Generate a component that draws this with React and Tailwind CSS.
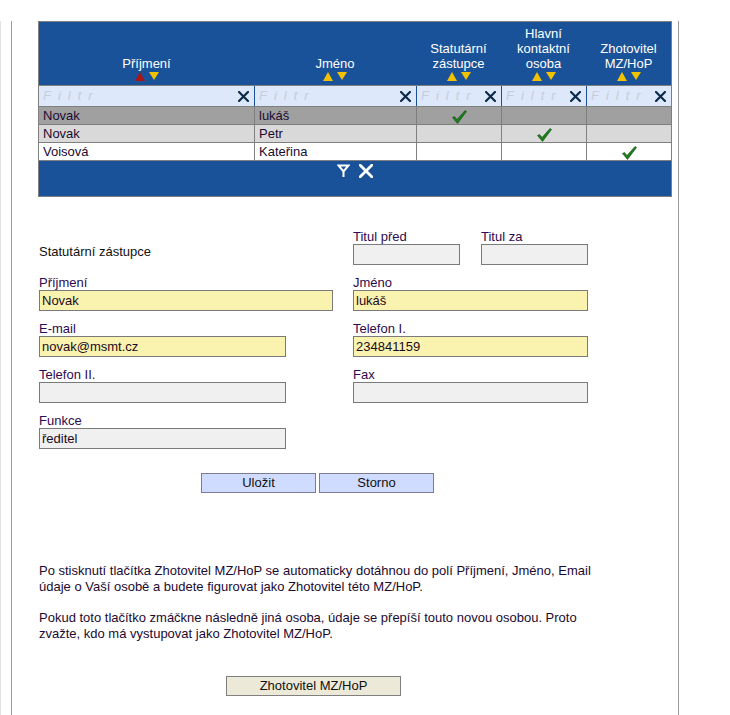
import React from "react"

const font = { fontFamily: '"Liberation Sans", Arial, sans-serif' }

const TriUp = ({ color }) => (
    <svg width="10" height="9" viewBox="0 0 10 9"><path d="M5 0 L10 9 L0 9 Z" fill={color} /></svg>
)

const TriDown = () => (
    <svg width="10" height="9" viewBox="0 0 10 9"><path d="M0 0 L10 0 L5 8 Z" fill="#f2c200" /></svg>
)

const SmallX = ({ color = "#0c2b4b", size = 11, w = 2.2 }) => (
    <svg width={size} height={size} viewBox="0 0 11 11">
        <path d="M1 1 L10 10 M10 1 L1 10" stroke={color} strokeWidth={w} strokeLinecap="square" />
    </svg>
)

const Check = () => (
    <svg width="15" height="14" viewBox="0 0 15 14">
        <path d="M0.5 7.5 L2.5 6.5 L5 9.5 L13 0.5 L14.5 1.5 L5.5 13.5 Z" fill="#1f7d1f" stroke="#0f4f0f" strokeWidth="0.6" />
    </svg>
)

const Funnel = () => (
    <svg width="13" height="14" viewBox="0 0 13 14">
        <path d="M1.5 1.5 H11.5 L6.5 7.5 Z" fill="none" stroke="#fff" strokeWidth="2" strokeLinejoin="miter" />
        <path d="M6.5 7 V13" stroke="#fff" strokeWidth="2" />
    </svg>
)

const columns = [
    { title: ["Příjmení"], first: true },
    { title: ["Jméno"] },
    { title: ["Statutární", "zástupce"] },
    { title: ["Hlavní", "kontaktní", "osoba"] },
    { title: ["Zhotovitel", "MZ/HoP"] },
]

const rows = [
    { bg: "bg-[#a0a0a0]", prijmeni: "Novak", jmeno: "lukáš", check: 2 },
    { bg: "bg-[#d9d9d9]", prijmeni: "Novak", jmeno: "Petr", check: 3 },
    { bg: "bg-white", prijmeni: "Voisová", jmeno: "Kateřina", check: 4 },
]

const grid = "grid grid-cols-[215px_162px_85px_85px_85px]"

const Table = () => (
    <div className="ml-[26px] mt-[21px] w-[634px] border border-[#7f7f7f] text-[13px]">
        <div className={grid + " h-[63px] bg-[#1a5299]"}>
            {columns.map((c, i) => (
                <div key={i} className="flex flex-col items-center justify-end pb-[4px] text-white leading-[15px] text-center">
                    {c.title.map(t => <div key={t}>{t}</div>)}
                    <div className="flex gap-[4px] mt-[1px]">
                        <TriUp color={c.first ? "#a8161a" : "#f2c200"} />
                        <TriDown />
                    </div>
                </div>
            ))}
        </div>
        <div className={grid + " h-[21px] border-t border-[#7f7f7f] bg-[#dde8fb]"}>
            {columns.map((c, i) => (
                <div key={i} className={"flex items-center justify-between pl-[4px] pr-[5px] " + (i > 0 ? "border-l border-[#1a5299]" : "")}>
                    <span className="italic text-[#c6ccd8] tracking-[7px]">Filtr</span>
                    <SmallX />
                </div>
            ))}
        </div>
        {rows.map((r, ri) => (
            <div key={ri} className={grid + " h-[18px] border-t border-[#7f7f7f] text-[#1c0a30] " + r.bg}>
                <div className="pl-[4px] leading-[17px]">{r.prijmeni}</div>
                <div className="pl-[4px] leading-[17px] border-l border-[#7f7f7f]">{r.jmeno}</div>
                {[2, 3, 4].map(c => (
                    <div key={c} className="flex justify-center items-end border-l border-[#7f7f7f]">
                        {r.check === c && <Check />}
                    </div>
                ))}
            </div>
        ))}
        <div className="h-[36px] border-t border-[#7f7f7f] bg-[#1a5299] flex justify-center items-start pt-[3px] gap-[9px]">
            <Funnel />
            <SmallX color="#fff" size={14} w={2.2} />
        </div>
    </div>
)

const Field = ({ label, value = "", width, yellow }) => (
    <div className="flex flex-col">
        <div className="leading-[15px] text-[#2e0a4e]">{label}</div>
        <div className={"h-[21px] border border-[#7a7a7a] px-[2px] leading-[19px] text-[#1c0a20] " + width + " " + (yellow ? "bg-[#faf3b0]" : "bg-[#f0f0f0]")}>
            {value}
        </div>
    </div>
)

const Form = () => (
    <div className="ml-[27px] mt-[32px] flex flex-col gap-[10px] text-[13px]">
        <div className="flex">
            <div className="w-[314px] pt-[15px] leading-[15px] text-[#111]">Statutární zástupce</div>
            <div className="flex gap-[21px]">
                <Field label="Titul před" width="w-[107px]" />
                <Field label="Titul za" width="w-[107px]" />
            </div>
        </div>
        <div className="flex">
            <div className="w-[314px]"><Field label="Příjmení" value="Novak" width="w-[294px]" yellow /></div>
            <Field label="Jméno" value="lukáš" width="w-[235px]" yellow />
        </div>
        <div className="flex">
            <div className="w-[314px]"><Field label="E-mail" value="novak@msmt.cz" width="w-[247px]" yellow /></div>
            <Field label="Telefon I." value="234841159" width="w-[235px]" yellow />
        </div>
        <div className="flex">
            <div className="w-[314px]"><Field label="Telefon II." width="w-[247px]" /></div>
            <Field label="Fax" width="w-[235px]" />
        </div>
        <div className="flex">
            <Field label="Funkce" value="ředitel" width="w-[247px]" />
        </div>
    </div>
)

export default function App() {
    return (
        <div className="min-h-[715px] bg-white border-l border-[#e2e2e2]" style={font}>
            <div className="ml-[10px] w-[668px] min-h-[715px] border-x border-[#9a9a9a] pb-[20px]">
                <Table />
                <Form />
                <div className="ml-[189px] mt-[24px] flex gap-[3px] text-[13px]">
                    <button className="w-[115px] h-[20px] bg-[#cfdcff] border border-[#7b7b96] text-[#111] leading-[18px]">Uložit</button>
                    <button className="w-[115px] h-[20px] bg-[#cfdcff] border border-[#7b7b96] text-[#111] leading-[18px]">Storno</button>
                </div>
                <div className="ml-[27px] mt-[70px] w-[580px] text-[13px] leading-[16px] text-[#1c0a30]">
                    <p>Po stisknutí tlačítka Zhotovitel MZ/HoP se automaticky dotáhnou do polí Příjmení, Jméno, Email údaje o Vaší osobě a budete figurovat jako Zhotovitel této MZ/HoP.</p>
                    <p className="mt-[15px]">Pokud toto tlačítko zmáčkne následně jiná osoba, údaje se přepíší touto novou osobou. Proto zvažte, kdo má vystupovat jako Zhotovitel MZ/HoP.</p>
                </div>
                <div className="ml-[214px] mt-[31px]">
                    <button className="w-[175px] h-[20px] bg-[#ece9d8] border border-[#7f7f7f] text-[13px] text-[#111] leading-[18px]">Zhotovitel MZ/HoP</button>
                </div>
            </div>
        </div>
    )
}
